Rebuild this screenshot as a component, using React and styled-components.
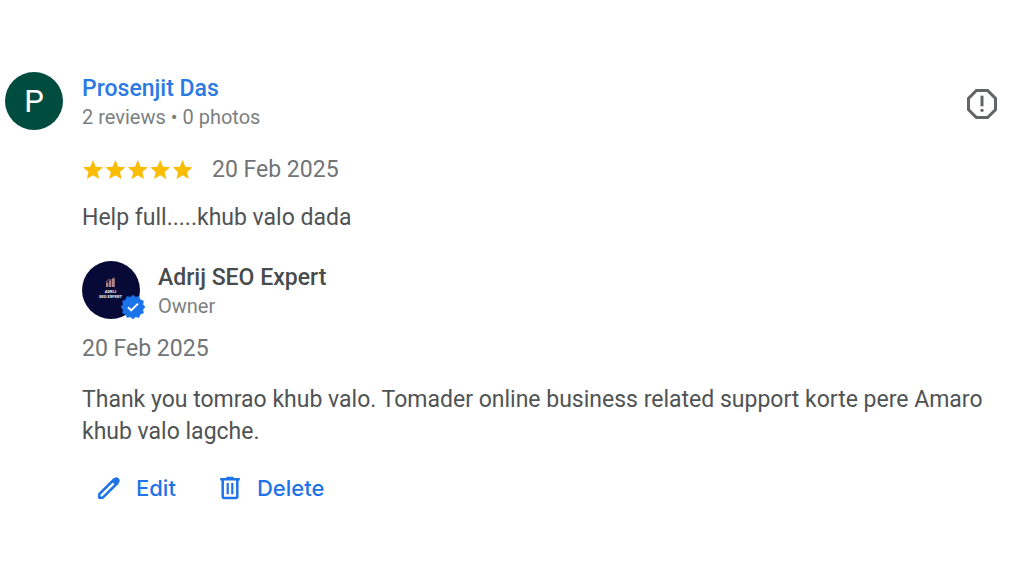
import React from "react";
import styled, { createGlobalStyle } from "styled-components";

const GlobalStyle = createGlobalStyle`
  *, *::before, *::after { box-sizing: border-box; }
  body {
    margin: 0;
    background: #fff;
    color: #505354;
    font-family: Roboto, "Liberation Sans", sans-serif;
    font-size: 23px;
    line-height: 32px;
  }
  p, h2, h3 { margin: 0; }
`;

const Review = styled.article`
  display: grid;
  grid-template-columns: 57px minmax(0, 1fr) 30px;
  column-gap: 20px;
  align-items: start;
  padding: 72px 27px 24px 5px;
`;

const Avatar = styled.div`
  display: flex;
  align-items: center;
  justify-content: center;
  width: 58px;
  height: 58px;
  padding-top: 2px;
  border-radius: 50%;
  background: #004d40;
  color: #fff;
  font-size: 31px;
`;

const Person = styled.header`
  display: flex;
  flex-direction: column;
  align-items: flex-start;
`;

const Reviewer = styled(Person)`
  padding-top: 1px;
`;

const ReviewerLink = styled.a`
  color: #2b7ae4;
  font-weight: 500;
  text-decoration: none;
`;

const OwnerName = styled.h3`
  color: #484b4d;
  font-size: 23px;
  font-weight: 500;
`;

const Caption = styled.p`
  color: #7c7f81;
  font-size: 20px;
  line-height: 24px;
`;

const ReportButton = styled.button`
  display: flex;
  margin-top: 17px;
  padding: 0;
  border: 0;
  background: none;
  color: #626567;
  cursor: pointer;
`;

const Content = styled.div`
  grid-column: 2 / -1;
`;

const RatingRow = styled.div`
  display: flex;
  align-items: center;
  gap: 20px;
  margin-top: 24px;
`;

const Stars = styled.span`
  display: flex;
  padding-bottom: 3px;
  color: #fbbc04;
`;

const DateText = styled.time`
  display: block;
  color: #717476;
`;

const Comment = styled.p`
  margin-top: 16px;
`;

const Owner = styled.div`
  display: flex;
  align-items: center;
  gap: 18px;
  margin-top: 27px;
  margin-bottom: 14px;
`;

const OwnerAvatar = styled.div`
  position: relative;
  display: flex;
  width: 58px;
  height: 58px;
`;

const Verified = styled.svg`
  position: absolute;
  right: -5px;
  bottom: 0;
`;

const Reply = styled.p`
  margin-top: 19px;
`;

const Actions = styled.div`
  display: flex;
  gap: 12px;
  margin-top: 20px;
`;

const ActionButton = styled.button`
  display: flex;
  align-items: center;
  gap: 15px;
  height: 40px;
  padding: 0 15px;
  border: 0;
  background: none;
  color: #1f73e8;
  font: 500 22px/32px Inter, sans-serif;
  cursor: pointer;
`;

const StarRow = () => (
  <svg width="110" height="22" viewBox="0 0 110 22" fill="currentColor" aria-hidden="true">
    {[0, 1, 2, 3, 4].map((n) => (
      <path
        key={n}
        transform={`translate(${n * 22.4 - 1} 0)`}
        d="M12 17.27 18.18 21l-1.64-7.03L22 9.24l-7.19-.61L12 2 9.19 8.63 2 9.24l5.46 4.73L5.82 21z"
      />
    ))}
  </svg>
);

const ReportIcon = () => (
  <svg width="30" height="30" viewBox="3 3 18 18" fill="currentColor" aria-hidden="true">
    <path d="M15.73 3H8.27L3 8.27v7.46L8.27 21h7.46L21 15.73V8.27L15.73 3zM19.2 15 15 19.2H9L4.8 15V9L9 4.8h6L19.2 9v6z" />
    <rect x="11.1" y="7" width="1.8" height="6.4" />
    <circle cx="12" cy="15.8" r="1" />
  </svg>
);

const OwnerLogo = () => (
  <svg width="58" height="58" viewBox="0 0 58 58" aria-hidden="true">
    <circle cx="29" cy="29" r="29" fill="#070936" />
    <g fill="#b08284">
      <rect x="24" y="21.5" width="2.4" height="4.5" />
      <rect x="27" y="19.5" width="2.4" height="6.5" />
      <rect x="30" y="17.5" width="2.8" height="8.5" />
    </g>
    <path d="M24 21l3-2.5 2 .8 3.5-2.8" fill="none" stroke="#b98078" strokeWidth=".8" />
    <g fill="#e3e3e8" fontFamily="Roboto, sans-serif" fontWeight="900" textAnchor="middle">
      <text x="28.5" y="31.5" fontSize="4">ADRIJ</text>
      <text x="28.5" y="36.5" fontSize="4">SEO EXPERT</text>
    </g>
  </svg>
);

const badgePoints = Array.from({ length: 24 }, (_, i) => {
  const radius = i % 2 ? 10.2 : 12;
  const angle = (i * Math.PI) / 12;
  return `${(12 + radius * Math.cos(angle)).toFixed(2)},${(12 + radius * Math.sin(angle)).toFixed(2)}`;
}).join(" ");

const VerifiedBadge = () => (
  <Verified width="24" height="24" viewBox="0 0 24 24" role="img" aria-label="Verified">
    <polygon points={badgePoints} fill="#1a73e8" stroke="#1a73e8" strokeWidth=".6" strokeLinejoin="round" />
    <path d="m7 12.2 3.2 3.2 6.8-6.8" fill="none" stroke="#fff" strokeWidth="2" />
  </Verified>
);

const EditIcon = () => (
  <svg width="24" height="24" viewBox="0 0 24 24" aria-hidden="true">
    <path
      d="M2.3 21.7v-3.5L17 3.5l3.5 3.5L5.8 21.7z"
      fill="none"
      stroke="currentColor"
      strokeWidth="2.5"
      strokeLinejoin="round"
    />
    <path d="m14.4 5.2 3.2-3.2c1-1 2.6-1 3.6 0l.8.8c1 1 1 2.6 0 3.6l-3.2 3.2z" fill="currentColor" />
  </svg>
);

const DeleteIcon = () => (
  <svg width="24" height="24" viewBox="0 0 24 24" fill="none" stroke="currentColor" aria-hidden="true">
    <path d="M2.2 3.2h19.6M8.4 1.9h7.2" strokeWidth="2.4" />
    <path d="M4.7 3.5v17.1c0 .9.6 1.5 1.5 1.5h11.6c.9 0 1.5-.6 1.5-1.5V3.5" strokeWidth="2.5" />
    <path d="M9.7 7v11.2M14.3 7v11.2" strokeWidth="2.2" />
  </svg>
);

export default function App() {
  return (
    <>
      <GlobalStyle />
      <main>
        <Review>
          <Avatar>P</Avatar>
          <Reviewer>
            <ReviewerLink href="#reviewer">Prosenjit Das</ReviewerLink>
            <Caption>2 reviews • 0 photos</Caption>
          </Reviewer>
          <ReportButton type="button" aria-label="Report review">
            <ReportIcon />
          </ReportButton>
          <Content>
            <RatingRow>
              <Stars role="img" aria-label="5 out of 5 stars">
                <StarRow />
              </Stars>
              <DateText dateTime="2025-02-20">20 Feb 2025</DateText>
            </RatingRow>
            <Comment>Help full.....khub valo dada</Comment>
            <Owner>
              <OwnerAvatar>
                <OwnerLogo />
                <VerifiedBadge />
              </OwnerAvatar>
              <Person>
                <OwnerName>Adrij SEO Expert</OwnerName>
                <Caption>Owner</Caption>
              </Person>
            </Owner>
            <DateText dateTime="2025-02-20">20 Feb 2025</DateText>
            <Reply>
              Thank you tomrao khub valo. Tomader online business related support korte pere Amaro khub valo lagche.
            </Reply>
            <Actions>
              <ActionButton type="button">
                <EditIcon />
                Edit
              </ActionButton>
              <ActionButton type="button">
                <DeleteIcon />
                Delete
              </ActionButton>
            </Actions>
          </Content>
        </Review>
      </main>
    </>
  );
}
